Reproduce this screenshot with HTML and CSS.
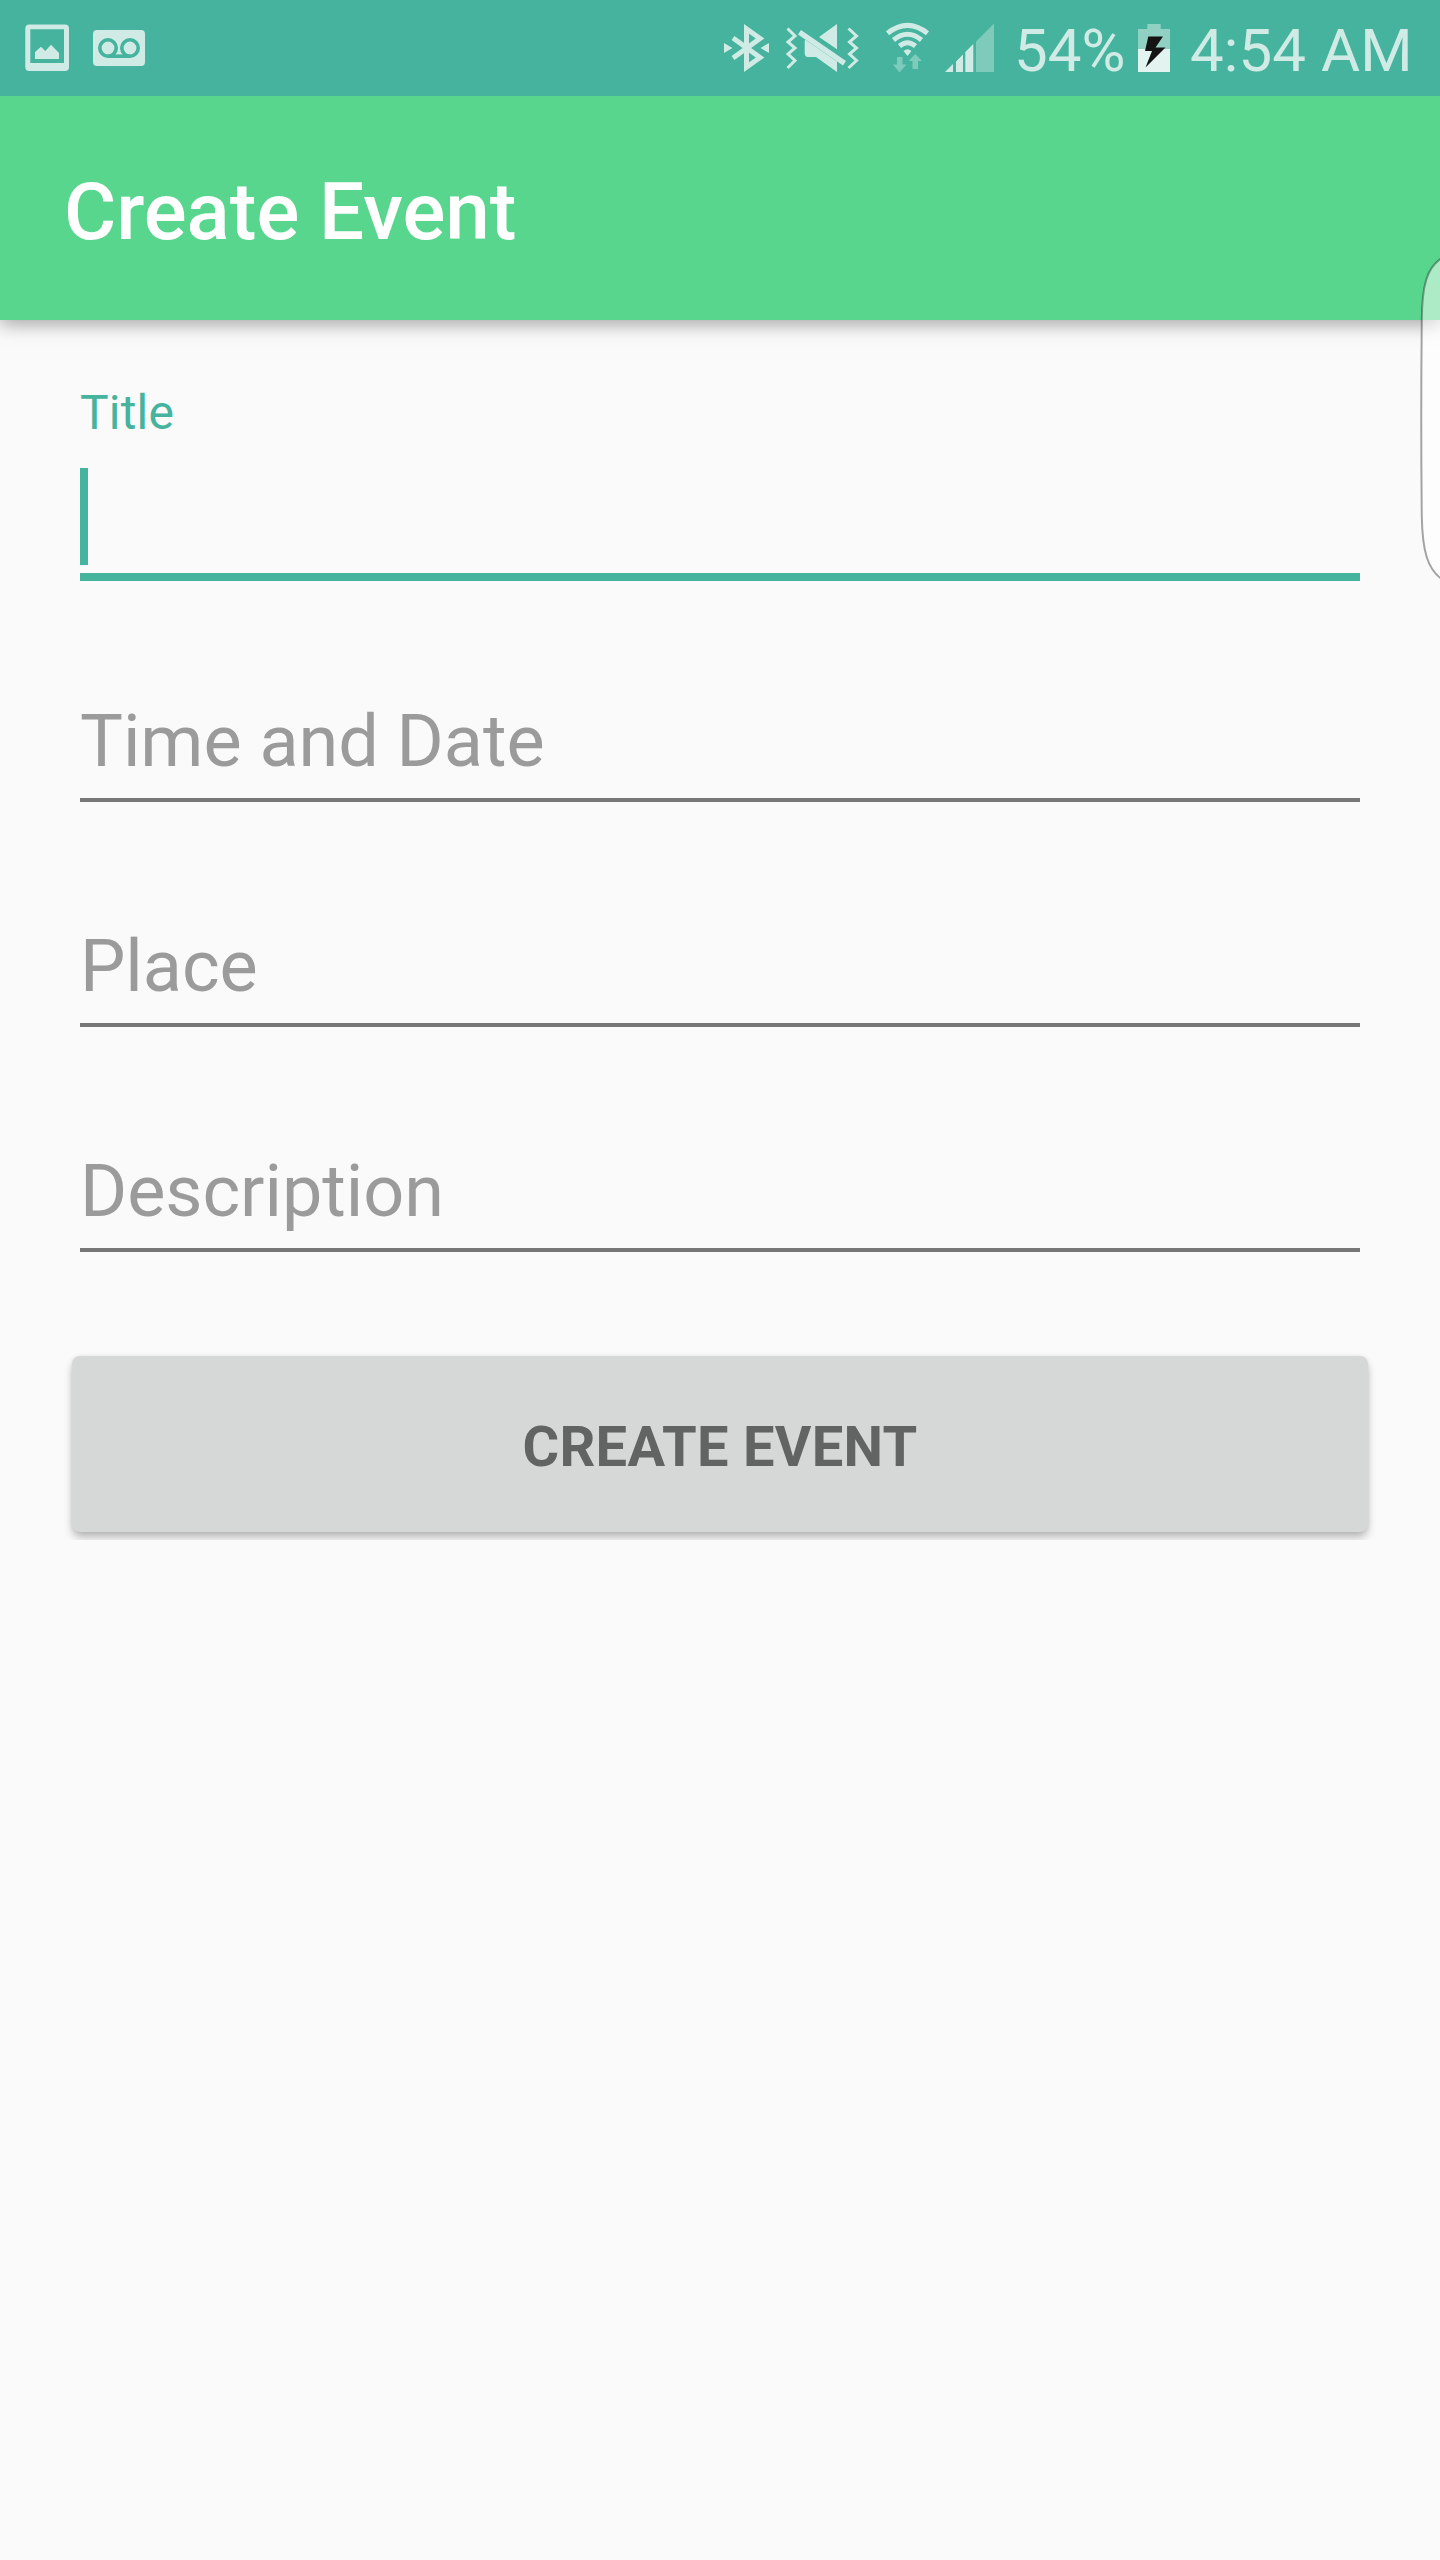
FILE: index.html
```html
<!DOCTYPE html>
<html lang="en">
<head>
<meta charset="utf-8">
<title>Create Event</title>
<link rel="stylesheet" href="styles.css">
</head>
<body>
<header class="status-bar">
  <div class="notifications">
    <svg class="icon" width="44" height="48" viewBox="25 24 44 48">
      <path fill-rule="evenodd" d="M29 24.4H65a4 4 0 0 1 4 4V67a4 4 0 0 1-4 4H29.300a4 4 0 0 1-4-4V28.400a4 4 0 0 1 4-4ZM30.300 29.300V63H64V29.300Z"/>
      <path d="M35 59V52L41 46.700L45.300 51L51 44.700L59 53V59Z"/>
    </svg>
    <svg class="icon" width="52" height="48" viewBox="93 24 52 48">
      <rect x="93" y="30" width="52" height="36" rx="4"/>
      <g class="voicemail-tape"><circle cx="108" cy="48" r="8.200"/><circle cx="130" cy="48" r="8.200"/><path d="M108 56.200H130"/></g>
    </svg>
  </div>
  <div class="system">
    <svg class="icon" width="46" height="48" viewBox="724 24 46 48">
      <path class="stroke-5" d="M733 38L760 57.500L746.500 67.200V28.800L760 38.500L733 58"/>
      <path d="M724 43L732.500 48L724 53ZM769 43L760.500 48L769 53Z"/>
    </svg>
    <svg class="icon vibrate" width="73" height="48" viewBox="786 24 73 48">
      <path class="stroke-3" d="M787.500 28.500L795 36L788 42L795 48L788 54L795 60.500L787.500 68M848.500 28.500L856.500 36L849.500 42L856.500 48L849.500 54L856.500 60.500L848.500 68"/>
      <path d="M837 24V49.300L819 37ZM805 39.500L837 61.500V72L816 57H808Q804.700 57 804.700 53V42Z"/>
      <path d="M801 30L846 61L843 65.500L798 34.500Z"/>
    </svg>
    <svg class="icon wifi" width="44" height="52" viewBox="886 22 44 52">
      <g class="stroke-5"><path d="M887.500 33.300Q907.500 17.500 927.500 33.300"/><path d="M893.500 40Q907.500 28.500 921.500 40"/><path d="M899.500 46Q907.500 39.500 915.500 46"/></g>
      <path d="M903.500 51Q907.500 47.500 911.500 51L907.500 56Z"/>
      <path class="dim" d="M897 57H902.500V64.500H906.500L899.500 72.500L893 64.500H897ZM912.500 69V61H908.500L915.300 54L922 61H918V69Z"/>
    </svg>
    <svg class="icon signal" width="49" height="50" viewBox="945 23 49 50">
      <path d="M945 72L953 64V72ZM956 72V61.500L963 54.500V72ZM965.300 72V52L973.300 44V72Z"/>
      <path class="dim" d="M976 72V41.500L994 23.500V72Z"/>
    </svg>
    <span class="percent">54%</span>
    <svg class="icon battery" width="32" height="48" viewBox="1138 24 32 48">
      <path class="battery-empty" d="M1138 49V29H1147.300V24H1160.700V29H1170V49Z"/>
      <path class="battery-full" d="M1138 49H1170V72H1138Z"/>
      <path class="bolt" d="M1148.300 36.500H1163L1155.500 47.500H1165.500L1145.500 67.500L1152 51H1145Z"/>
    </svg>
    <span class="clock">4:54 AM</span>
  </div>
</header>
<div class="toolbar"><h1 class="toolbar-title">Create Event</h1></div>
<main class="form">
  <div class="field field-active">
    <span class="label">Title</span>
    <span class="cursor"></span>
  </div>
  <div class="field field-first"><span class="hint">Time and Date</span></div>
  <div class="field"><span class="hint">Place</span></div>
  <div class="field"><span class="hint">Description</span></div>
  <button class="submit" type="button">CREATE EVENT</button>
</main>
<svg class="edge-handle" width="20" height="324" viewBox="1420 257 20 324">
  <path d="M1441 258.500C1427 268 1422 285 1421.800 320Q1420.700 418 1421.800 517C1422.500 552 1428 569 1441 578.500"/>
</svg>
</body>
</html>
```
FILE: styles.css
```css
* { box-sizing: border-box; }

body {
  margin: 0;
  width: 1440px;
  height: 2560px;
  position: relative;
  overflow: hidden;
  background: #fafafa;
  font-family: Roboto, sans-serif;
}

.status-bar {
  position: relative;
  z-index: 1;
  display: flex;
  justify-content: space-between;
  height: 96px;
  padding: 0 25px;
  background: #45b39d;
  color: #d0ebe5;
  font-size: 60px;
  line-height: 101px;
}

.notifications, .system { display: flex; align-items: center; }
.notifications { gap: 24px; }
.system { width: 691px; height: 96px; }
.icon { display: block; flex: none; fill: #d0ebe5; overflow: visible; }
.voicemail-tape { fill: none; stroke: #45b39d; stroke-width: 3.6; }
.stroke-5 { fill: none; stroke: #d0ebe5; stroke-width: 5; stroke-miterlimit: 10; }
.stroke-3 { fill: none; stroke: #d0ebe5; stroke-width: 3; }
.dim { fill: #7ecabb; }
.vibrate { margin-left: 16px; }
.wifi { margin-left: 27px; }
.signal { margin-left: 15px; }
.percent { width: 116px; margin-left: 20px; height: 96px; white-space: nowrap; }
.battery { margin-left: 8px; }
.clock { margin-left: 20px; height: 96px; white-space: nowrap; letter-spacing: 0.1px; }
.battery-empty { fill: #91d1c4; }
.battery-full { fill: #e3f3f0; }
.bolt { fill: #141414; }

.toolbar {
  position: relative;
  height: 224px;
  padding: 69px 64px 0;
  background: #58d68d;
  box-shadow: 0 4px 18px rgba(0, 0, 0, 0.36);
}

.toolbar-title {
  margin: 0;
  color: #fff;
  font-size: 80px;
  font-weight: 500;
  line-height: 94px;
}

.form { display: flex; flex-direction: column; padding: 0 72px; }

.field {
  display: flex;
  flex-direction: column;
  justify-content: flex-end;
  height: 225px;
  margin: 0 8px;
  border-bottom: 4px solid #777;
}

.field-first { height: 221px; }

.field-active {
  justify-content: flex-start;
  height: 261px;
  padding-top: 64px;
  border-bottom: 8px solid #45b39d;
}

.label { color: #45b39d; font-size: 48px; line-height: 57px; letter-spacing: 0.2px; }
.cursor { width: 8px; height: 97px; margin-top: 27px; background: #45b39d; }
.hint { margin-bottom: 13px; color: #9b9b9b; font-size: 72px; line-height: 86px; letter-spacing: -0.05px; }

.submit {
  height: 176px;
  margin-top: 104px;
  padding: 5px 0 0;
  border: 0;
  border-radius: 8px;
  background: #d6d8d7;
  box-shadow: 0 6px 10px -1px rgba(0, 0, 0, 0.28), 0 0 4px rgba(0, 0, 0, 0.08);
  clip-path: inset(-8px -8px -8px -8px);
  color: #626463;
  font-family: inherit;
  font-size: 56px;
  font-weight: 700;
  line-height: 66px;
  letter-spacing: 0.3px;
}

.edge-handle {
  position: absolute;
  top: 257px;
  right: 0;
  fill: rgba(255, 255, 255, 0.5);
  stroke: rgba(0, 0, 0, 0.35);
  stroke-width: 2;
}
```
